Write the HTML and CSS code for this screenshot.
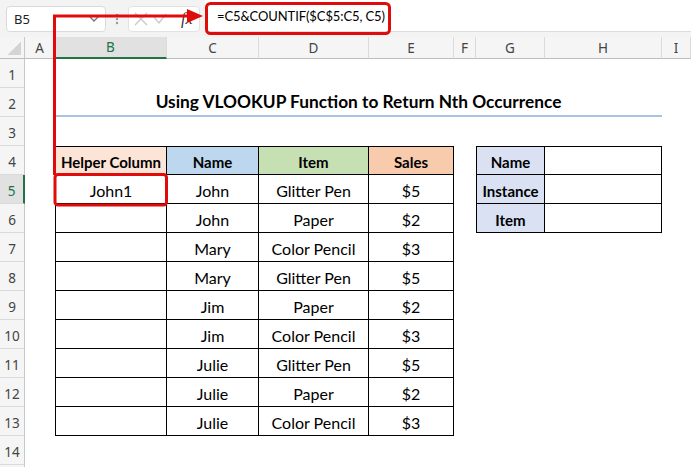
FILE: index.html
```html
<!DOCTYPE html>
<html>
<head>
<meta charset="utf-8">
<title>VLOOKUP Nth Occurrence</title>
<link rel="stylesheet" href="styles.css">
</head>
<body>
<div class="app">
  <div class="toolbar">
    <div class="namebox">
      <span class="nb-text">B5</span>
      <svg class="chev" width="10" height="6" viewBox="0 0 10 6"><polyline points="1,1 5,5 9,1" fill="none" stroke="#777" stroke-width="1.3"/></svg>
    </div>
    <div class="sep">
      <svg width="4" height="14" viewBox="0 0 4 14"><circle cx="2" cy="3" r="1.2" fill="#999"/><circle cx="2" cy="7" r="1.2" fill="#999"/><circle cx="2" cy="11" r="1.2" fill="#999"/></svg>
    </div>
    <div class="fxbox">
      <svg class="ico" width="16" height="16" viewBox="0 0 16 16"><path d="M2 2 L14 14 M14 2 L2 14" stroke="#c8c8c8" stroke-width="1.3" fill="none"/></svg>
      <svg class="ico" width="16" height="16" viewBox="0 0 16 16"><polyline points="2,6 7,12 14,3" stroke="#c8c8c8" stroke-width="1.3" fill="none"/></svg>
      <span class="fx">fx</span>
    </div>
    <div class="formula">=C5&amp;COUNTIF($C$5:C5, C5)</div>
  </div>

  <div class="sheet">
    <div class="corner"><span class="tri"></span></div>
    <div class="ch">A</div>
    <div class="ch sel">B</div>
    <div class="ch">C</div>
    <div class="ch">D</div>
    <div class="ch">E</div>
    <div class="ch">F</div>
    <div class="ch">G</div>
    <div class="ch">H</div>
    <div class="ch">I</div>

    <div class="rh">1</div><div class="blank"></div>

    <div class="rh">2</div>
    <div class="c"></div>
    <div class="c title">Using VLOOKUP Function to Return Nth Occurrence</div>
    <div class="c"></div>

    <div class="rh">3</div><div class="blank"></div>

    <div class="rh">4</div>
    <div class="c"></div>
    <div class="c t tl tt bold f-peach">Helper Column</div>
    <div class="c t tt bold f-blue">Name</div>
    <div class="c t tt bold f-green">Item</div>
    <div class="c t tt bold f-orange">Sales</div>
    <div class="c"></div>
    <div class="c t tl tt bold f-lav">Name</div>
    <div class="c t tt"></div>
    <div class="c"></div>

    <div class="rh rsel">5</div>
    <div class="c"></div>
    <div class="c t tl">John1</div>
    <div class="c t">John</div>
    <div class="c t">Glitter Pen</div>
    <div class="c t">$5</div>
    <div class="c"></div>
    <div class="c t tl bold f-lav">Instance</div>
    <div class="c t"></div>
    <div class="c"></div>

    <div class="rh">6</div>
    <div class="c"></div>
    <div class="c t tl"></div>
    <div class="c t">John</div>
    <div class="c t">Paper</div>
    <div class="c t">$2</div>
    <div class="c"></div>
    <div class="c t tl bold f-lav">Item</div>
    <div class="c t"></div>
    <div class="c"></div>

    <div class="rh">7</div>
    <div class="c"></div>
    <div class="c t tl"></div>
    <div class="c t">Mary</div>
    <div class="c t">Color Pencil</div>
    <div class="c t">$3</div>
    <div class="rest"></div>

    <div class="rh">8</div>
    <div class="c"></div>
    <div class="c t tl"></div>
    <div class="c t">Mary</div>
    <div class="c t">Glitter Pen</div>
    <div class="c t">$5</div>
    <div class="rest"></div>

    <div class="rh">9</div>
    <div class="c"></div>
    <div class="c t tl"></div>
    <div class="c t">Jim</div>
    <div class="c t">Paper</div>
    <div class="c t">$2</div>
    <div class="rest"></div>

    <div class="rh">10</div>
    <div class="c"></div>
    <div class="c t tl"></div>
    <div class="c t">Jim</div>
    <div class="c t">Color Pencil</div>
    <div class="c t">$3</div>
    <div class="rest"></div>

    <div class="rh">11</div>
    <div class="c"></div>
    <div class="c t tl"></div>
    <div class="c t">Julie</div>
    <div class="c t">Glitter Pen</div>
    <div class="c t">$5</div>
    <div class="rest"></div>

    <div class="rh">12</div>
    <div class="c"></div>
    <div class="c t tl"></div>
    <div class="c t">Julie</div>
    <div class="c t">Paper</div>
    <div class="c t">$2</div>
    <div class="rest"></div>

    <div class="rh">13</div>
    <div class="c"></div>
    <div class="c t tl"></div>
    <div class="c t">Julie</div>
    <div class="c t">Color Pencil</div>
    <div class="c t">$3</div>
    <div class="rest"></div>

    <div class="rh">14</div><div class="blank"></div>
    <div class="rh"></div><div class="blank"></div>
  </div>

  <svg class="overlay" width="691" height="467" viewBox="0 0 691 467">
    <path d="M54.5 175 V16 H190" fill="none" stroke="#e00b0b" stroke-width="3"/>
    <polygon points="187,9 203,16 187,23" fill="#e00b0b"/>
    <rect x="206.5" y="3.5" width="183" height="30" rx="4" fill="none" stroke="#e00b0b" stroke-width="3"/>
    <rect x="55" y="174.5" width="111.5" height="30.5" rx="3" fill="none" stroke="#e00b0b" stroke-width="3"/>
  </svg>
</div>
</body>
</html>
```

FILE: styles.css
```css
* { box-sizing: border-box; }
html, body { margin: 0; padding: 0; background: #fff; }
body { width: 691px; height: 467px; overflow: hidden; }

.app {
  position: relative;
  width: 691px;
  height: 467px;
  overflow: hidden;
  font-family: Lato, "Liberation Sans", sans-serif;
}

/* ---------- formula bar ---------- */
.toolbar {
  height: 37px;
  background: #f3f3f3;
  display: flex;
  align-items: center;
}
.namebox {
  margin-left: 6px;
  width: 100px;
  height: 26px;
  background: #fff;
  border: 1px solid #dadada;
  border-radius: 4px;
  display: flex;
  align-items: center;
  justify-content: space-between;
  padding: 0 6px 0 7px;
}
.nb-text {
  font-family: "Noto Sans", "Open Sans", sans-serif;
  font-size: 13px;
  color: #222;
}
.sep {
  width: 22px;
  display: flex;
  justify-content: center;
}
.fxbox {
  width: 72px;
  height: 26px;
  background: #fff;
  border: 1px solid #e2e2e2;
  border-radius: 4px;
  display: flex;
  align-items: center;
  padding: 0 4px 0 4px;
  gap: 3px;
}
.fx {
  margin-left: 10px;
  font-family: "Liberation Serif", serif;
  font-style: italic;
  font-size: 16px;
  color: #333;
}
.formula {
  flex: 1;
  align-self: flex-start;
  margin-left: 5px;
  height: 32px;
  background: #fff;
  border-bottom: 1px solid #dcdcdc;
  padding-left: 12px;
  display: flex;
  align-items: center;
  font-size: 13px;
  letter-spacing: -0.1px;
  color: #000;
}

/* ---------- sheet grid ---------- */
.sheet {
  display: grid;
  grid-template-columns: 25px 30px 112px 92px 110px 85px 22px 69px 117px 29px;
  grid-template-rows: 22px repeat(15, 29px);
}
.corner {
  background: #f5f5f5;
  border-right: 1px solid #c8c8c8;
  border-bottom: 1px solid #bdbdbd;
  display: flex;
  justify-content: flex-end;
  align-items: flex-end;
  padding: 0 3px 3px 0;
}
.tri {
  width: 13px;
  height: 13px;
  background: linear-gradient(to top left, #d4d4d4 50%, transparent 50%);
}
.ch {
  background: #f5f5f5;
  border-right: 1px solid #dadada;
  border-bottom: 1px solid #bdbdbd;
  display: flex;
  align-items: center;
  justify-content: center;
  font-family: "Noto Sans", "Open Sans", sans-serif;
  font-size: 13.5px;
  color: #444;
}
.ch.sel {
  background: #e1e1e1;
  color: #217346;
  border-bottom: 2px solid #217346;
}
.rh {
  background: #f5f5f5;
  border-right: 1px solid #c8c8c8;
  border-bottom: 1px solid #dadada;
  display: flex;
  align-items: flex-end;
  justify-content: center;
  padding-bottom: 3px;
  font-family: "Noto Sans", "Open Sans", sans-serif;
  font-size: 13.5px;
  color: #444;
}
.rh.rsel {
  background: #e1e1e1;
  color: #217346;
  border-right: 2px solid #217346;
}
.blank { grid-column: 2 / -1; }
.rest { grid-column: 7 / -1; }

.c {
  display: flex;
  align-items: flex-end;
  justify-content: center;
  padding-bottom: 4px;
  font-size: 16px;
  color: #000;
  white-space: nowrap;
}
.c.t { border-right: 1px solid #000; border-bottom: 1px solid #000; padding-bottom: 3px; }
.c.tl { border-left: 1px solid #000; }
.c.tt { border-top: 1px solid #000; }
.bold { font-weight: 700; font-size: 15px; }

.title {
  grid-column: 3 / 10;
  font-weight: 700;
  font-size: 17.3px;
  border-bottom: 2px solid #a9c4e3;
  padding-bottom: 3px;
}

.f-peach { background: #fce4d6; }
.f-blue { background: #bdd7ee; }
.f-green { background: #c6e0b4; }
.f-orange { background: #f8cbad; }
.f-lav { background: #d9e1f2; }

/* ---------- annotation ---------- */
.overlay {
  position: absolute;
  left: 0;
  top: 0;
  pointer-events: none;
}
```
